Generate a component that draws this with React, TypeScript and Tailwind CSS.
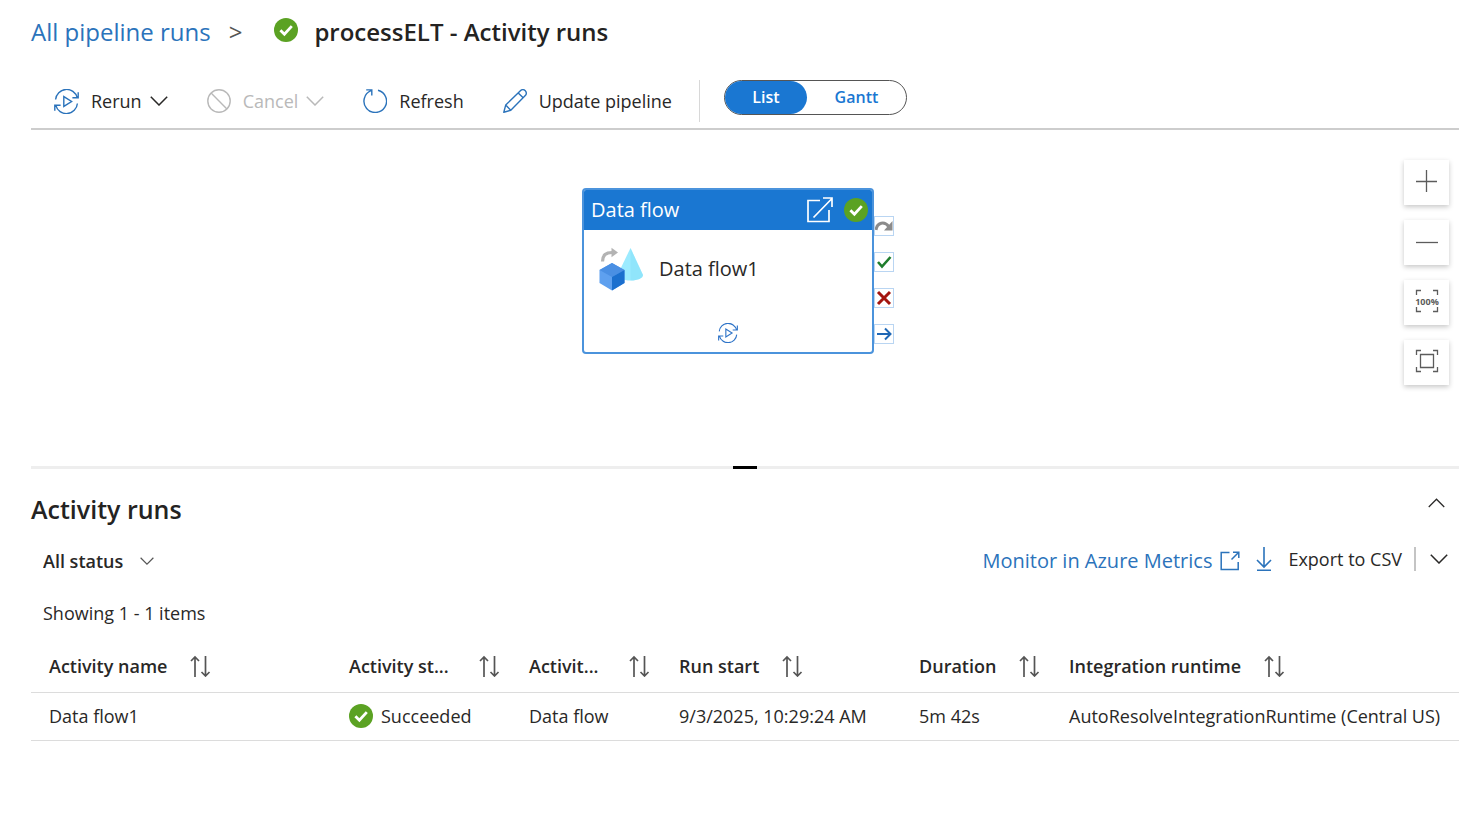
import type { ReactNode } from "react";

function SuccessIcon({ className }: { className: string }) {
  return (
    <svg viewBox="0 0 24 24" className={className} aria-hidden="true">
      <circle cx="12" cy="12" r="12" fill="#5ba223" />
      <path d="M6.4 12.2l4 4.1 7.4-8.2" fill="none" stroke="#fff" strokeWidth="2.8" />
    </svg>
  );
}

function RerunIcon({ className }: { className: string }) {
  return (
    <svg viewBox="0 0 25 25" className={className} fill="none" stroke="currentColor" strokeWidth="1.4" aria-hidden="true">
      <path d="M1.6 10.5A11 11 0 0 1 23.2 8.6M24.2 3.2v5.6h-5.8" />
      <path d="M23.4 14.5A11 11 0 0 1 1.8 16.4M.8 21.8v-5.6h5.8" />
      <path d="M9.8 7.6v9.8l7.8-4.9z" />
    </svg>
  );
}

function CancelIcon() {
  return (
    <svg viewBox="0 0 24 24" className="size-6" fill="none" stroke="currentColor" strokeWidth="1.4" aria-hidden="true">
      <circle cx="12" cy="12" r="11.2" />
      <path d="M4.1 4.1l15.8 15.8" />
    </svg>
  );
}

function RefreshIcon() {
  return (
    <svg viewBox="0 0 24 24" className="size-6 text-[#2b73bb]" fill="none" stroke="currentColor" strokeWidth="1.4" aria-hidden="true">
      <path d="M15 1.2A11.3 11.3 0 1 1 8 1.7M3.2.9h5.6v5.6" />
    </svg>
  );
}

function PencilIcon() {
  return (
    <svg viewBox="0 0 24 24" className="size-6 text-[#2b73bb]" fill="none" stroke="currentColor" strokeWidth="1.4" strokeLinejoin="round" aria-hidden="true">
      <path d="M.8 23.2l1.9-7.1L17.4 1.7a3.4 3.4 0 0 1 4.9 4.9L7.8 21.3zM2.7 16.1l5.1 5.2M15.2 3.9l5 4.9" />
    </svg>
  );
}

function Chevron({ className, up = false }: { className: string; up?: boolean }) {
  return (
    <svg viewBox="0 0 18 10" className={className} fill="none" stroke="currentColor" aria-hidden="true">
      <path d={up ? "M.8 9.2L9 1l8.2 8.2" : "M.8.8L9 9 17.2.8"} />
    </svg>
  );
}

function SortIcon() {
  return (
    <svg viewBox="0 0 22 22" className="size-[22px] shrink-0 text-[#555]" fill="none" stroke="currentColor" strokeWidth="1.7" aria-hidden="true">
      <path d="M6 22V2M2 6L6 2l4 4M16.500 1v20M12.500 17l4 4 4-4" />
    </svg>
  );
}

function DataFlowIcon() {
  return (
    <svg viewBox="0 0 44 44" className="h-11 w-11 shrink-0" aria-hidden="true">
      <path d="M31.500 1L18.500 28c0 3 5.500 5.500 13 5.500S44 31 44 28z" fill="#9cebff" />
      <path d="M31.500 1L44 28c0 3-5 5.500-12.500 5.500z" fill="#83def6" opacity=".45" />
      <path d="M3.500 14.500C3.500 8 7 5.500 13 5.500" fill="none" stroke="#b3b3b3" strokeWidth="3.200" />
      <path d="M12.500.8l6.500 4.700-6.500 4.700z" fill="#b3b3b3" />
      <path d="M13 16l12.500 7v13L13 43.500.5 36V23z" fill="#5ea0ef" />
      <path d="M.5 23L13 16l12.500 7L13 30z" fill="#4a8fe3" />
      <path d="M25.500 23v13L13 43.500V30z" fill="#1b6fce" />
    </svg>
  );
}

function ToolbarButton({ icon, label, menu, disabled }: { icon: ReactNode; label: string; menu?: boolean; disabled?: boolean }) {
  return (
    <button
      type="button"
      disabled={disabled}
      className={`flex items-center whitespace-nowrap text-lg ${disabled ? "text-[#b9b9b9]" : "text-[#292827]"}`}
    >
      {icon}
      <span className="ml-3">{label}</span>
      {menu && <Chevron className="ml-2 h-2.5 w-[18px] stroke-[1.500]" />}
    </button>
  );
}

const ports = [
  {
    name: "Upon skip",
    icon: (
      <svg viewBox="0 0 18 18" className="size-full" aria-hidden="true">
        <path d="M1 13C2 5.500 9.500 3.500 14 10" fill="none" stroke="#8b8b8b" strokeWidth="3" />
        <path d="M17.500 4v9.500H9z" fill="#8b8b8b" />
      </svg>
    ),
  },
  {
    name: "Upon success",
    icon: (
      <svg viewBox="0 0 18 18" className="size-full" aria-hidden="true">
        <path d="M3 9l4 4.500L15.500 4" fill="none" stroke="#1f7d2c" strokeWidth="2.600" />
      </svg>
    ),
  },
  {
    name: "Upon failure",
    icon: (
      <svg viewBox="0 0 18 18" className="size-full" aria-hidden="true">
        <path d="M3 3l12 12M15 3L3 15" fill="none" stroke="#a4150f" strokeWidth="3" />
      </svg>
    ),
  },
  {
    name: "Upon completion",
    icon: (
      <svg viewBox="0 0 18 18" className="size-full" aria-hidden="true">
        <path d="M2 9h13M10 3.500L15.500 9 10 14.500" fill="none" stroke="#1f67b5" strokeWidth="2" />
      </svg>
    ),
  },
];

const corners = "M1.500 6V1.500H6M18 1.500h4.500V6M22.500 18v4.500H18M6 22.500H1.500V18";

const zoomTools = [
  { name: "Zoom in", icon: <path d="M11.500 1v22M1 12.500h21" /> },
  { name: "Zoom out", icon: <path d="M1 13.500h22" /> },
  {
    name: "Reset zoom to 100%",
    icon: (
      <>
        <path d={corners} />
        <text x="12" y="15.500" fontSize="9" fontWeight="700" textAnchor="middle" fill="currentColor" stroke="none">
          100%
        </text>
      </>
    ),
  },
  {
    name: "Zoom to fit",
    icon: (
      <>
        <path d={corners} />
        <path d="M5.500 5.500h13v13h-13z" />
      </>
    ),
  },
];

const columns = [
  { label: "Activity name", width: "w-[300px]", gap: "gap-[22px]" },
  { label: "Activity st...", width: "w-[180px]", gap: "justify-between pr-[11px]" },
  { label: "Activit...", width: "w-[150px]", gap: "justify-between pr-[11px]" },
  { label: "Run start", width: "w-[240px]", gap: "gap-[22px]" },
  { label: "Duration", width: "w-[150px]", gap: "justify-between pr-[11px]" },
  { label: "Integration runtime", width: "w-auto", gap: "gap-[22px]" },
];

export default function App() {
  return (
    <div className="min-h-screen bg-white pl-[31px] font-['Open_Sans','Noto_Sans',sans-serif] text-lg text-[#292827]">
      <header className="flex h-16 items-center whitespace-nowrap text-2xl">
        <a href="#runs" className="text-[#2b73bb]">All pipeline runs</a>
        <span className="ml-[18px] text-[#555]">&gt;</span>
        <SuccessIcon className="mb-1 ml-8 size-6" />
        <h1 className="ml-4 font-semibold text-[#242322]">processELT - Activity runs</h1>
      </header>

      <div className="flex h-[66px] items-center border-b-2 border-[#cdcdcd] pt-2.5 pl-[23px]">
        <div className="flex items-center gap-[39px]">
          <ToolbarButton icon={<RerunIcon className="size-[25px] text-[#2b73bb]" />} label="Rerun" menu />
          <ToolbarButton icon={<CancelIcon />} label="Cancel" menu disabled />
          <ToolbarButton icon={<RefreshIcon />} label="Refresh" />
          <ToolbarButton icon={<PencilIcon />} label="Update pipeline" />
        </div>
        <div className="ml-[27px] h-[42px] w-px bg-[#d8d8d8]" />
        <div className="mb-2 ml-6 flex h-[35px] w-[183px] rounded-full border border-[#555] text-base font-semibold">
          <button type="button" aria-pressed="true" className="w-[82px] rounded-full bg-[#1a77d2] text-white">List</button>
          <button type="button" aria-pressed="false" className="flex-1 rounded-full text-[#1a77d2]">Gantt</button>
        </div>
      </div>

      <section aria-label="Pipeline canvas" className="relative h-[336px]">
        <div className="absolute top-[58px] left-[551px] flex items-start">
          <article className="h-[166px] w-[292px] overflow-hidden rounded border-2 border-[#4b93dc] bg-white">
            <div className="flex h-10 items-center bg-[#1a77d2] pr-1 pl-[7px] text-xl text-white">
              <span className="flex-1">Data flow</span>
              <button type="button" aria-label="Open data flow">
                <svg viewBox="0 0 26 26" className="size-[26px]" fill="none" stroke="currentColor" strokeWidth="1.700" aria-hidden="true">
                  <path d="M13 3.500H1v21h21V13M6.500 20.500L25 1.500M16 1h9v9" />
                </svg>
              </button>
              <SuccessIcon className="ml-[11px] size-6" />
            </div>
            <div className="flex items-center gap-4 px-[15px] pt-[17px] text-xl">
              <DataFlowIcon />
              <span>Data flow1</span>
            </div>
            <button type="button" aria-label="Rerun from activity" className="mx-auto mt-8 block text-[#2f74c8]">
              <RerunIcon className="size-5" />
            </button>
          </article>
          <div className="mt-7 flex flex-col gap-4">
            {ports.map((port) => (
              <button key={port.name} type="button" aria-label={port.name} className="size-5 border border-[#b9d5f2] bg-white">
                {port.icon}
              </button>
            ))}
          </div>
        </div>
        <div className="absolute top-[30px] right-[10px] flex flex-col gap-[15px]">
          {zoomTools.map((tool) => (
            <button
              key={tool.name}
              type="button"
              aria-label={tool.name}
              className="flex size-[45px] items-center justify-center bg-white text-[#5c5c5c] shadow-[0_2px_5px_rgba(0,0,0,0.22)]"
            >
              <svg viewBox="0 0 24 24" className="mb-1 size-6 overflow-visible" fill="none" stroke="currentColor" strokeWidth="1.300" aria-hidden="true">
                {tool.icon}
              </svg>
            </button>
          ))}
        </div>
      </section>

      <div role="separator" className="flex h-[3px] justify-center bg-[#eeeeee]">
        <div className="w-6 bg-black" />
      </div>

      <section aria-labelledby="activity-heading" className="pt-4">
        <div className="flex h-12 items-center justify-between pr-3.5">
          <h2 id="activity-heading" className="text-[25px] font-semibold text-[#242322]">Activity runs</h2>
          <button type="button" aria-label="Collapse activity runs" className="pb-3">
            <Chevron up className="h-2.5 w-[17px] stroke-[1.300]" />
          </button>
        </div>

        <div className="flex h-14 items-center justify-between pr-[11px] pl-3">
          <label className="flex items-center gap-4">
            <select aria-label="Status filter" className="appearance-none bg-transparent font-semibold">
              <option>All status</option>
            </select>
            <Chevron className="h-2 w-3.5 text-[#555] stroke-[1.500]" />
          </label>
          <div className="flex items-center whitespace-nowrap">
            <a href="#metrics" className="flex items-center gap-2 text-xl text-[#2b73bb]">
              Monitor in Azure Metrics
              <svg viewBox="0 0 20 20" className="size-5" fill="none" stroke="currentColor" strokeWidth="1.500" aria-hidden="true">
                <path d="M9.500 1.500H1.200v17h17V11M11.500 8.500l7-7M13 1.200h5.800V7" />
              </svg>
            </a>
            <div className="mb-1 flex items-center">
              <button type="button" className="ml-4 flex items-center gap-4">
                <svg viewBox="0 0 16 24" className="h-6 w-4 text-[#2b73bb]" fill="none" stroke="currentColor" strokeWidth="1.600" aria-hidden="true">
                  <path d="M8 0v20M1 13l7 7 7-7M1 23.200h14" />
                </svg>
                Export to CSV
              </button>
              <div className="ml-3 h-6 w-0.5 bg-[#c4c4c4]" />
              <button type="button" aria-label="More export options" className="ml-3.5">
                <Chevron className="h-2.5 w-[18px] stroke-[1.500]" />
              </button>
            </div>
          </div>
        </div>

        <p className="flex h-12 items-center pl-3">Showing 1 - 1 items</p>

        <table className="w-full table-fixed border-collapse text-left whitespace-nowrap">
          <thead>
            <tr className="h-[55px] border-b border-[#dcdcdc]">
              {columns.map((column) => (
                <th key={column.label} scope="col" className={`pt-1 pl-[18px] font-semibold ${column.width}`}>
                  <button type="button" className={`flex w-full items-center ${column.gap}`}>
                    {column.label}
                    <SortIcon />
                  </button>
                </th>
              ))}
            </tr>
          </thead>
          <tbody>
            <tr className="h-12 border-b border-[#dcdcdc]">
              <td className="pl-[18px]">Data flow1</td>
              <td className="pl-[18px]">
                <span className="flex items-center gap-2">
                  <SuccessIcon className="size-6" />
                  Succeeded
                </span>
              </td>
              <td className="pl-[18px]">Data flow</td>
              <td className="pl-[18px]">9/3/2025, 10:29:24 AM</td>
              <td className="pl-[18px]">5m 42s</td>
              <td className="pl-[18px]">AutoResolveIntegrationRuntime (Central US)</td>
            </tr>
          </tbody>
        </table>
      </section>
    </div>
  );
}
